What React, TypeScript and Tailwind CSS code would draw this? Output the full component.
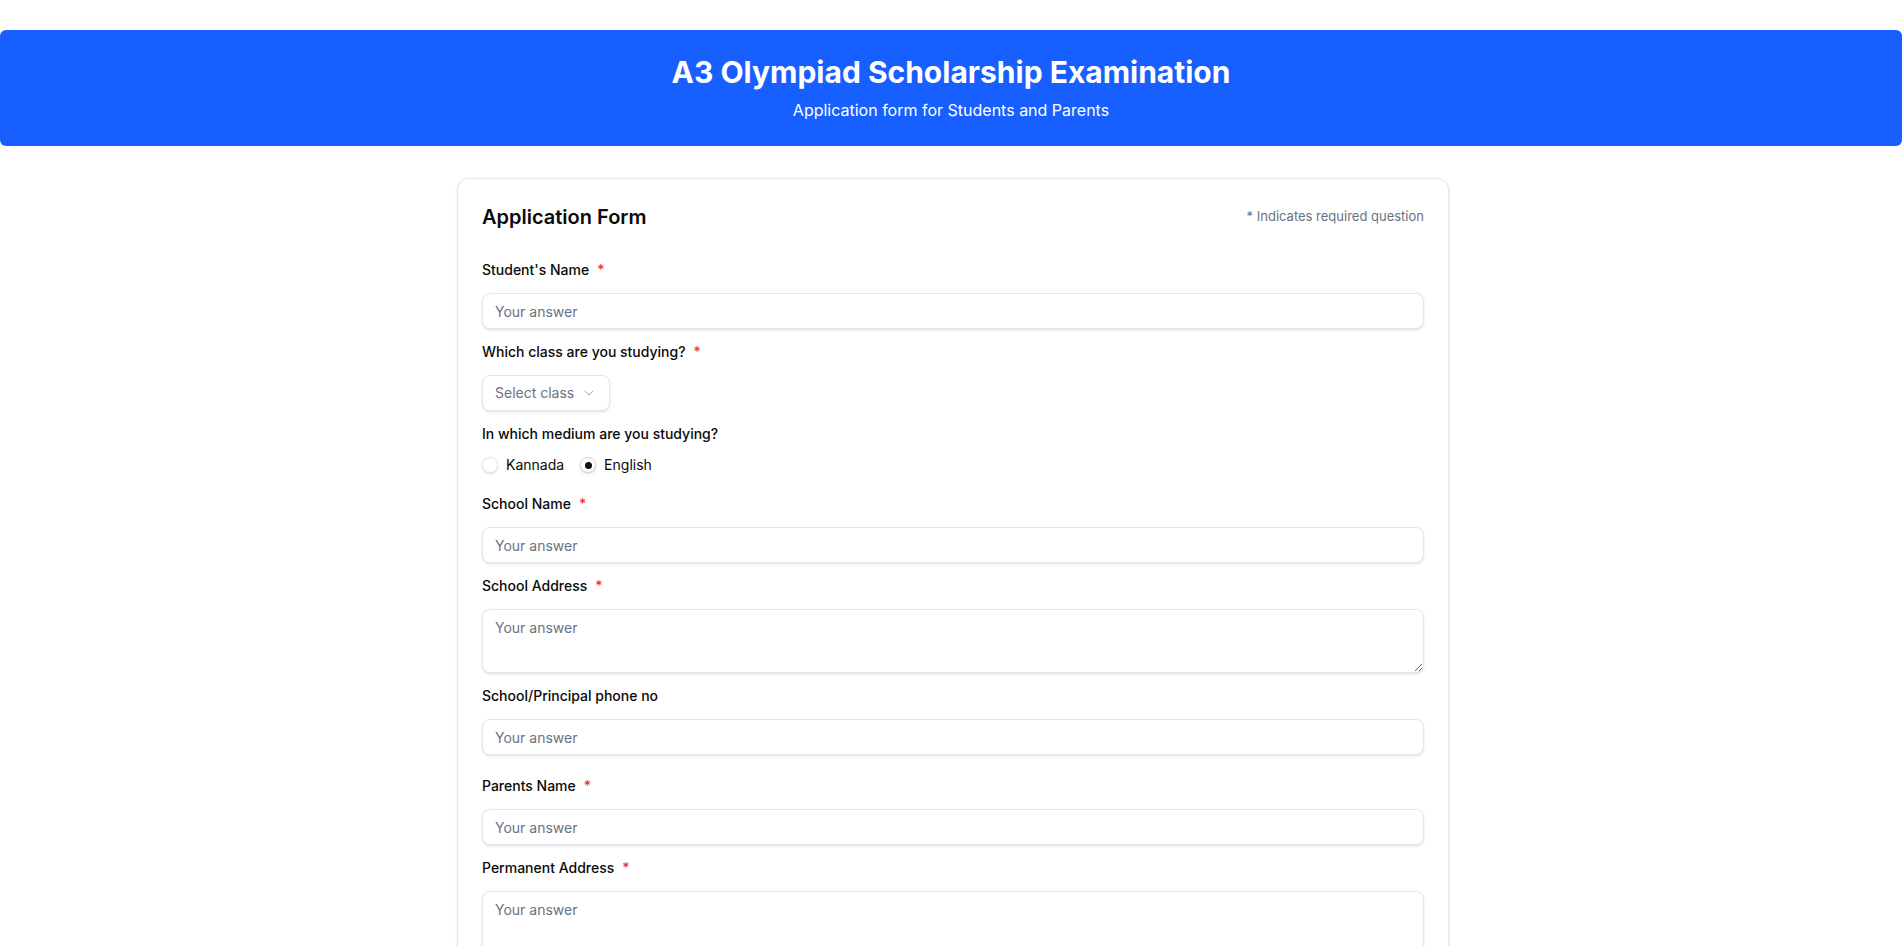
import { ChevronDown } from "lucide-react";

const font = { fontFamily: "Inter, 'Noto Sans', sans-serif" };

function Label({ text, required }: { text: string; required?: boolean }) {
  return (
    <div className="flex h-5 items-center text-sm font-medium leading-5 text-[#0a0a0a]">
      <span>{text}</span>
      {required && <span className="ml-2 text-red-500">*</span>}
    </div>
  );
}

function TextInput() {
  return (
    <input
      type="text"
      placeholder="Your answer"
      className="mt-[13px] h-9 w-full rounded-lg border border-gray-200 bg-white px-3 text-sm text-gray-900 shadow-sm outline-none placeholder:text-gray-500"
    />
  );
}

function TextArea({ tall }: { tall?: boolean }) {
  return (
    <textarea
      placeholder="Your answer"
      className={
        "mt-[13px] block w-full rounded-lg border border-gray-200 bg-white px-3 py-2 text-sm text-gray-900 shadow-sm outline-none placeholder:text-gray-500 " +
        (tall ? "h-24" : "h-16")
      }
    />
  );
}

function Radio({ label, checked }: { label: string; checked?: boolean }) {
  return (
    <label className="flex h-5 items-center gap-2 text-sm text-[#0a0a0a]">
      <span
        className={
          "flex h-4 w-4 items-center justify-center rounded-full border bg-white shadow-sm " +
          (checked ? "border-gray-300" : "border-gray-200")
        }
      >
        {checked && <span className="h-[7px] w-[7px] rounded-full bg-[#111]" />}
      </span>
      {label}
    </label>
  );
}

export default function App() {
  return (
    <div className="min-h-screen bg-white pb-16" style={font}>
      <header className="mt-[30px] rounded-md bg-[#175fff] py-6 text-center text-white">
        <h1 className="text-3xl leading-9 font-bold">A3 Olympiad Scholarship Examination</h1>
        <p className="mt-2 text-base leading-6">Application form for Students and Parents</p>
      </header>

      <main className="mx-auto mt-8 max-w-[992px] translate-x-[2px] rounded-xl border border-gray-200 bg-white p-6 shadow-sm">
        <div className="mb-[29px] flex items-center justify-between">
          <h2 className="text-xl leading-7 font-semibold text-[#0a0a0a]">Application Form</h2>
          <span className="text-[13px] text-gray-500">* Indicates required question</span>
        </div>

        <form className="flex flex-col gap-[13px]">
          <div>
            <Label text="Student's Name" required />
            <TextInput />
          </div>

          <div>
            <Label text="Which class are you studying?" required />
            <button
              type="button"
              className="mt-[13px] flex h-9 w-[128px] items-center justify-between rounded-lg border border-gray-200 bg-white px-3 text-sm text-gray-500 shadow-sm"
            >
              Select class
              <ChevronDown className="h-4 w-4 opacity-60" strokeWidth={1.5} />
            </button>
          </div>

          <div className="pb-1.5">
            <Label text="In which medium are you studying?" />
            <div className="mt-[11px] flex items-center gap-4">
              <Radio label="Kannada" />
              <Radio label="English" checked />
            </div>
          </div>

          <div>
            <Label text="School Name" required />
            <TextInput />
          </div>

          <div>
            <Label text="School Address" required />
            <TextArea />
          </div>

          <div className="pb-2">
            <Label text="School/Principal phone no" />
            <TextInput />
          </div>

          <div>
            <Label text="Parents Name" required />
            <TextInput />
          </div>

          <div>
            <Label text="Permanent Address" required />
            <TextArea tall />
          </div>

          <div>
            <Label text="Parents phone no" required />
            <TextInput />
          </div>
        </form>
      </main>
    </div>
  );
}
